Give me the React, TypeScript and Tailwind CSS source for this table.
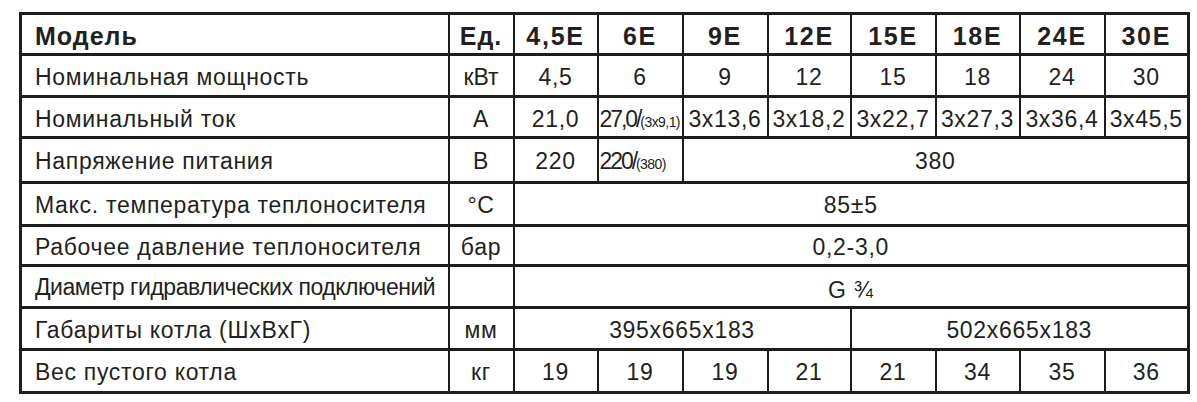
import React from "react";

const models = ["4,5E", "6E", "9E", "12E", "15E", "18E", "24E", "30E"];
const colWidths = [428, 65, 84, 85, 85, 83, 85, 84, 85, 84];

const cell = "border-x-2 border-y-[3px] border-[#1d1d1b] p-0 text-center align-middle";
const label = "border-x-2 border-y-[3px] border-[#1d1d1b] p-0 pl-[13px] text-left align-middle";

function Tight({ main, small }: { main: string; small: string }) {
  return (
    <span className="whitespace-nowrap tracking-normal">
      <span className="tracking-[-0.09em]">{main}</span>
      <span className="text-[14px] tracking-[-0.04em]">{small}</span>
    </span>
  );
}

export default function App() {
  return (
    <div className="min-h-[402px] bg-white pl-[19px] pt-[12px] text-[#231f20] [font-family:'Liberation_Sans',Arial,sans-serif]">
      <table
        className="table-fixed border-collapse border-[3px] border-[#1d1d1b] text-[23px] leading-none tracking-[0.03em]"
        style={{ width: 1169 }}
      >
        <colgroup>
          {colWidths.map((w, i) => (
            <col key={i} style={{ width: w }} />
          ))}
        </colgroup>
        <tbody>
          <tr className="h-[41px] text-[25px] font-bold tracking-[0.07em]">
            <td className={label}>
              <div className="pt-[5px] tracking-[0.04em]">Модель</div>
            </td>
            <td className={cell}>
              <div className="pt-[5px] tracking-[0.04em]">Ед.</div>
            </td>
            {models.map((m) => (
              <td key={m} className={cell}>
                <div className="pt-[5px]">{m}</div>
              </td>
            ))}
          </tr>
          <tr className="h-[42px]">
            <td className={label}><div className="pt-[4px]">Номинальная мощность</div></td>
            <td className={cell}><div className="pt-[4px] tracking-normal">кВт</div></td>
            {["4,5", "6", "9", "12", "15", "18", "24", "30"].map((v, i) => (
              <td key={i} className={cell}><div className="pt-[4px]">{v}</div></td>
            ))}
          </tr>
          <tr className="h-[41px]">
            <td className={label}><div className="pt-[4px]">Номинальный ток</div></td>
            <td className={cell}><div className="pt-[4px]">A</div></td>
            <td className={cell}><div className="pt-[4px]">21,0</div></td>
            <td className={cell}>
              <div className="pt-[4px] pl-[1px] text-left">
                <Tight main="27,0/" small="(3x9,1)" />
              </div>
            </td>
            {["3x13,6", "3x18,2", "3x22,7", "3x27,3", "3x36,4", "3x45,5"].map((v) => (
              <td key={v} className={cell}><div className="pt-[4px] whitespace-nowrap">{v}</div></td>
            ))}
          </tr>
          <tr className="h-[45px]">
            <td className={label}><div className="pt-[3px]">Напряжение питания</div></td>
            <td className={cell}><div className="pt-[3px]">B</div></td>
            <td className={cell}><div className="pt-[3px]">220</div></td>
            <td className={cell}>
              <div className="pt-[3px] pl-[1px] text-left">
                <Tight main="220/" small="(380)" />
              </div>
            </td>
            <td className={cell} colSpan={6}><div className="pt-[3px]">380</div></td>
          </tr>
          <tr className="h-[43px]">
            <td className={label}><div className="pt-[3px]">Макс. температура теплоносителя</div></td>
            <td className={cell}><div className="pt-[3px]">°C</div></td>
            <td className={cell} colSpan={8}><div className="pt-[3px]">85±5</div></td>
          </tr>
          <tr className="h-[40px]">
            <td className={label}><div className="pt-[3px]">Рабочее давление теплоносителя</div></td>
            <td className={cell}><div className="pt-[3px]">бар</div></td>
            <td className={cell} colSpan={8}><div className="pt-[3px]">0,2-3,0</div></td>
          </tr>
          <tr className="h-[42px]">
            <td className={label}>
              <div className="whitespace-nowrap tracking-[-0.02em] pt-[1px]">Диаметр гидравлических подключений</div>
            </td>
            <td className={cell} />
            <td className={cell} colSpan={8}><div className="pt-[8px]">G ¾</div></td>
          </tr>
          <tr className="h-[42px]">
            <td className={label}><div className="pt-[4px]">Габариты котла (ШxBxГ)</div></td>
            <td className={cell}><div className="pt-[4px]">мм</div></td>
            <td className={cell} colSpan={4}><div className="pt-[4px]">395x665x183</div></td>
            <td className={cell} colSpan={4}><div className="pt-[4px]">502x665x183</div></td>
          </tr>
          <tr className="h-[43px]">
            <td className={label}><div className="pt-[3px]">Вес пустого котла</div></td>
            <td className={cell}><div className="pt-[3px]">кг</div></td>
            {["19", "19", "19", "21", "21", "34", "35", "36"].map((v, i) => (
              <td key={i} className={cell}><div className="pt-[3px]">{v}</div></td>
            ))}
          </tr>
        </tbody>
      </table>
    </div>
  );
}
